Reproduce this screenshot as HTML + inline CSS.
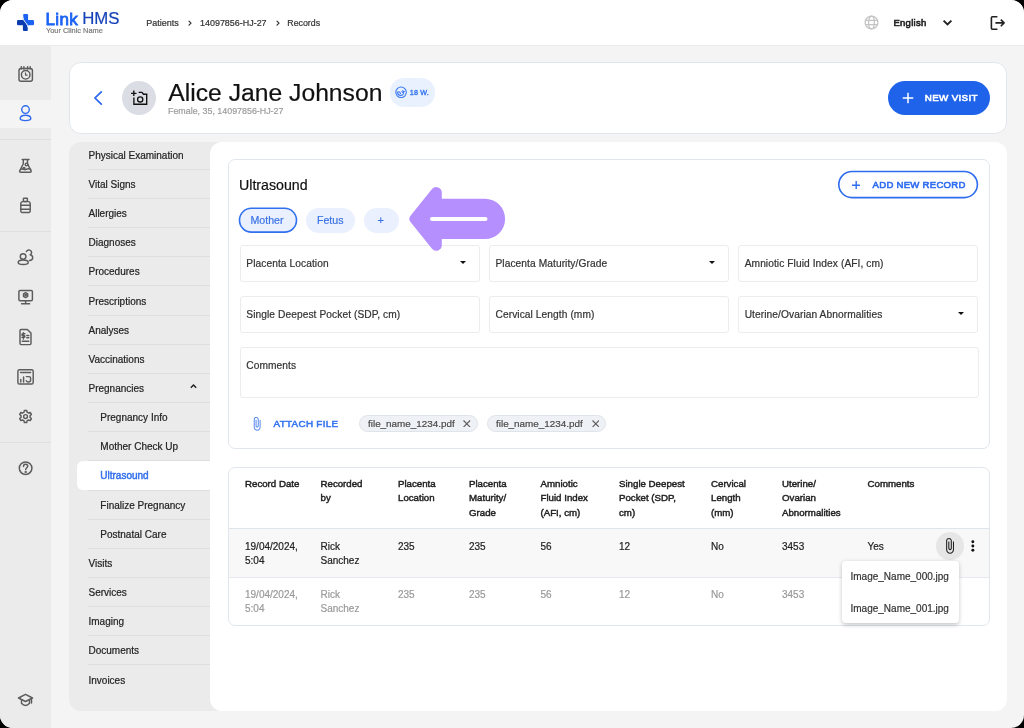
<!DOCTYPE html>
<html><head><meta charset="utf-8">
<style>
*{box-sizing:border-box;margin:0;padding:0}
html,body{width:1024px;height:728px;overflow:hidden;background:#000}
body{font-family:"Liberation Sans",sans-serif;color:#222;position:relative;-webkit-text-stroke:0.2px currentColor}
.page{will-change:transform;position:absolute;left:0;top:0;width:1024px;height:728px;background:#f4f4f4;border-radius:13px;overflow:hidden}
.abs{position:absolute}
.hdr{position:absolute;left:0;top:0;width:1024px;height:46px;background:#fff;border-bottom:1px solid #ebebeb}
.side{position:absolute;left:0;top:46px;width:50.6px;height:682px;background:#ebebeb}
.sep{position:absolute;left:0;width:50.6px;height:1px;background:#e0e0e0}
.t{position:absolute;white-space:nowrap;line-height:1}
.card{position:absolute;background:#fff;border:1px solid #e1e6ec}
.nav{position:absolute;left:68.6px;top:142px;width:160px;height:569px;background:#ebebeb;border-radius:12px}
.main{position:absolute;left:210.1px;top:142px;width:796.8px;height:569px;background:#fff;border-radius:12px 12px 12px 12px}
.ni{position:absolute;left:88.5px;font-size:10px;color:#222;white-space:nowrap;line-height:1}
.nsep{position:absolute;left:88px;width:122px;height:1px;background:#dedede}
.fld{position:absolute;background:#fff;border:1px solid #ececec;border-radius:3px}
.fl{position:absolute;left:5.8px;font-size:10.2px;letter-spacing:0.08px;color:#333;white-space:nowrap;line-height:1}
.tri{position:absolute;width:0;height:0;border-left:3.4px solid transparent;border-right:3.4px solid transparent;border-top:3.9px solid #111}
.th{position:absolute;font-size:9.7px;font-weight:normal;-webkit-text-stroke:0.45px #222;color:#222;line-height:14.1px}
.td{position:absolute;font-size:10px;color:#222;line-height:13.9px}
.td2{position:absolute;font-size:10px;color:#9a9a9a;line-height:13.9px}
</style></head><body>
<div class="page">
  <!-- header -->
  <div class="hdr">
    <svg class="abs" style="left:17px;top:14px" width="17" height="17" viewBox="0 0 17 17">
      <defs>
        <clipPath id="cr"><path d="M5.6 -2V0C5.6 10 11.4 7 11.4 17V19H19V-2Z"/></clipPath>
        <clipPath id="cl"><path d="M5.6 -2V0C5.6 10 11.4 7 11.4 17V19H-2V-2Z"/></clipPath>
      </defs>
      <g clip-path="url(#cr)" fill="#1b62f2"><rect x="5.9" y="0" width="5.2" height="17" rx="1.3"/><rect x="0" y="6" width="17" height="5.3" rx="1.3"/></g>
      <g clip-path="url(#cl)" fill="#0a3cb0"><rect x="5.9" y="0" width="5.2" height="17" rx="1.3"/><rect x="0" y="6" width="17" height="5.3" rx="1.3"/></g>
      <path d="M5.6 0C5.6 10 11.4 7 11.4 17" fill="none" stroke="#fff" stroke-width="1"/>
    </svg>
    <div class="t" style="left:45.4px;top:11.1px;font-size:17px;-webkit-text-stroke:0.8px #1b63f3;color:#1b63f3;letter-spacing:0.4px">Link</div>
    <div class="t" style="left:82.2px;top:11.1px;font-size:16.8px;-webkit-text-stroke:0.2px #1643b8;color:#1643b8;letter-spacing:0px">HMS</div>
    <div class="t" style="left:46px;top:27.2px;font-size:7.4px;color:#7a7a7a">Your Clinic Name</div>
    <div class="t" style="left:146.3px;top:18.9px;font-size:9px;color:#333">Patients</div>
    <svg class="abs" style="left:0;top:0" width="1024" height="46" fill="none" stroke="#333" stroke-width="1.15" stroke-linecap="round" stroke-linejoin="round"><path d="M189 21.2l2 2-2 2M277 21.2l2 2-2 2"/></svg>
    <div class="t" style="left:200px;top:18.9px;font-size:8.95px;color:#333">14097856-HJ-27</div>
    
    <div class="t" style="left:287.3px;top:18.9px;font-size:8.8px;color:#333">Records</div>
    <!-- globe -->
    <svg class="abs" style="left:864.3px;top:15.1px" width="15" height="15" viewBox="0 0 15 15" fill="none" stroke="#c4c4c4" stroke-width="1.25">
      <circle cx="7.5" cy="7.5" r="6.4"/><ellipse cx="7.5" cy="7.5" rx="2.9" ry="6.4"/><path d="M1.3 5.4h12.4M1.3 9.5h12.4"/>
    </svg>
    <div class="t" style="left:893.4px;top:17.5px;font-size:9.5px;-webkit-text-stroke:0.6px #222;color:#222;letter-spacing:0.3px">English</div>
    <svg class="abs" style="left:941.5px;top:19px" width="11" height="8" viewBox="0 0 11 8" fill="none" stroke="#222" stroke-width="1.9"><path d="M1.6 1.6l3.9 3.8 3.9-3.8"/></svg>
    <svg class="abs" style="left:988.3px;top:15.1px" width="18" height="16" viewBox="0 0 18 16" fill="none" stroke="#222" stroke-width="1.6" stroke-linejoin="round">
      <path d="M9.4 1.8H4.3c-.5 0-.9.4-.9.9v10.6c0 .5.4.9.9.9h5.1"/><path d="M7.4 7.9h8.6M12.8 4.6 16.1 7.9 12.8 11.2"/>
    </svg>
  </div>
  <!-- sidebar -->
  <div class="side"></div>
  <div class="abs" style="left:0;top:100px;width:50.6px;height:28px;background:#f4f4f4"></div>
  <div class="sep" style="top:139px"></div>
  <div class="sep" style="top:231px"></div>
  <div class="sep" style="top:442px"></div>
  <svg class="abs" style="left:0;top:45px" width="51" height="683" viewBox="0 45 51 683" fill="none" stroke="#5c5c5c" stroke-width="1.45" stroke-linecap="round" stroke-linejoin="round">
    <!-- calendar clock -->
    <rect x="19" y="68.4" width="13.4" height="12.8" rx="2"/>
    <path d="M21.3 66.6v2.4M23.9 66.6v2.4M27.6 66.6v2.4M30.2 66.6v2.4"/>
    <circle cx="25.7" cy="74.8" r="4.3"/>
    <path d="M25.5 72.8v2.3h1.7" stroke-width="1.2"/>
    <!-- person (active) -->
    <g stroke="#2f6bf0" stroke-width="1.4">
      <circle cx="25.5" cy="109.6" r="3.8"/>
      <path d="M20.2 118.6c0-2.1 2.4-3.4 5.3-3.4s5.3 1.3 5.3 3.4c0 1.4-2.4 2-5.3 2s-5.3-.6-5.3-2z"/>
    </g>
    <!-- flask -->
    <g transform="translate(0 0.8)">
    <path d="M22.2 158.7h6.8M23.3 158.7v4.2l-3.6 7.2c-.4.8.2 1.4 1 1.4h9.4c.8 0 1.4-.6 1-1.4l-3.6-7.2v-4.2"/>
    <circle cx="26.5" cy="163.6" r="1.3"/>
    <path d="M20.7 168.6c2-1.3 3.5 1.3 5.4 0 1.6-1 3-.9 4.6 0"/>
    <circle cx="24" cy="167.5" r="0.9"/>
    </g>
    <!-- bottle -->
    <rect x="23.4" y="198.2" width="4" height="3.2" rx="0.6"/>
    <path d="M22.9 201.6h5.2c1.2 0 2.1 1 2.1 2.2v7.5c0 .6-.5 1.1-1.1 1.1h-7.2c-.6 0-1.1-.5-1.1-1.1v-7.5c0-1.2.9-2.2 2.1-2.2z"/>
    <path d="M20.8 205.3h9.4M20.8 209.2h9.4"/>
    <!-- people -->
    <circle cx="23.1" cy="256.5" r="2.8"/>
    <path d="M18.2 262.4c0-1.5 2.2-2.4 5-2.4s5 .9 5 2.4-2.2 2-5 2-5-.5-5-2z"/>
    <path d="M26.4 251.6c.6-1.2 1.9-1.8 3.2-1.5 1.5.4 2.3 1.9 1.8 3.3-.2.6-.7 1.1-1.3 1.4 1.5.3 2.6 1.4 2.6 2.9 0 1.7-1.5 2.7-3.3 2.7"/>
    <!-- monitor -->
    <rect x="18.9" y="290.4" width="13.5" height="10.3" rx="1.2"/>
    <path d="M25.6 300.7v3M21.6 303.7h8"/>
    <path d="M25.6 292.6l2.1 1.2v2.6l-2.1 1.2-2.1-1.2v-2.6z"/>
    <circle cx="25.6" cy="295.1" r="0.7"/>
    <!-- invoice doc -->
    <path d="M20 330.5c0-.6.5-1.1 1.1-1.1h6.2l3.7 3.7v10.4c0 .6-.5 1.1-1.1 1.1h-8.8c-.6 0-1.1-.5-1.1-1.1z"/>
    <path d="M23.4 332.8v6.3M24.9 333.8h-2c-.6 0-1 .4-1 .9s.4.9 1 .9h1c.6 0 1 .4 1 .9s-.4.9-1 .9h-2"/>
    <path d="M26.8 335.4h2M26.8 337.8h2M22.2 341.3h6.6"/>
    <!-- chart window -->
    <rect x="17.9" y="369.8" width="15.3" height="14.2" rx="1.6"/>
    <path d="M20.6 372.5h10M20.8 382v-2.6M23.6 382v-5M26.4 376.6h2.6c1 0 1.6.8 1.6 1.6v1.9c0 1-.8 1.8-1.8 1.8h-.9c-.8 0-1.5-.5-1.6-1.2"/>
    <!-- gear -->
    <path d="M24.37 410.41 L26.73 410.41 L27.05 412.15 L28.57 413.03 L30.23 412.43 L31.41 414.48 L30.07 415.62 L30.07 417.38 L31.41 418.52 L30.23 420.57 L28.57 419.97 L27.05 420.85 L26.73 422.59 L24.37 422.59 L24.05 420.85 L22.53 419.97 L20.87 420.57 L19.69 418.52 L21.03 417.38 L21.03 415.62 L19.69 414.48 L20.87 412.43 L22.53 413.03 L24.05 412.15Z" stroke-width="1.45"/>
    <circle cx="25.55" cy="416.5" r="1.9"/>
    <!-- help -->
    <circle cx="25.6" cy="468.2" r="6.3" stroke-width="1.5"/>
    <path d="M23.5 466.4c0-1.3.9-2.2 2.1-2.2s2.1.8 2.1 2c0 1.5-2 1.7-2 3.4" stroke-width="1.5"/>
    <circle cx="25.7" cy="471.9" r="0.45" fill="#666"/>
    <!-- grad cap -->
    <path d="M25.5 694.3l7 3.7-7 3.5-7-3.5z"/>
    <path d="M21.5 700v3.2c1.2 1.5 2.6 2.2 4 2.2s2.8-.7 4-2.2V700M31.5 698.5v4.4"/>
  </svg>

  <!-- patient card -->
  <div class="card" style="left:68.5px;top:62px;width:938.3px;height:71.5px;border-radius:12px"></div>
  <svg class="abs" style="left:92px;top:90px" width="12" height="16" viewBox="0 0 12 16" fill="none" stroke="#2a66f0" stroke-width="1.7" stroke-linecap="round"><path d="M9.3 1.8 3 8l6.3 6.2"/></svg>
  <div class="abs" style="left:122.3px;top:81px;width:34px;height:34px;border-radius:50%;background:#dadee4"></div>
  <svg class="abs" style="left:0;top:0" width="1024" height="728" fill="none" stroke="#111" stroke-width="1.35">
    <path d="M131.1 93.3h5.4M133.8 90.6v5.4"/>
    <path d="M133.9 97.6v6.6h12.8v-10h-3.2l-1.5-1.8h-3.4"/>
    <circle cx="140.2" cy="99.4" r="2.6"/>
  </svg>
  <div class="t" style="left:168.3px;top:81.2px;font-size:24.7px;color:#111">Alice Jane Johnson</div>
  <div class="t" style="left:168px;top:107.1px;font-size:8.9px;color:#9c9c9c">Female, 35, 14097856-HJ-27</div>
  <div class="abs" style="left:390px;top:78.3px;width:45px;height:28.5px;border-radius:14px;background:#eaf1fe"></div>
  <svg class="abs" style="left:0;top:0" width="1024" height="728" viewBox="0 0 1024 728" fill="none" stroke="#3474f2" stroke-width="1.05" stroke-linecap="round">
    <circle cx="401.06" cy="92.3" r="5.25"/>
    <path d="M397.4 92.4c.4 2 1.7 3.1 3.2 3.1 1.8 0 3-1.4 3.1-3.2"/>
    <path d="M397.4 92.4c.6-.8 1.8-.9 2.5.1l.7 1.1"/>
    <ellipse cx="402.9" cy="91.6" rx="1.2" ry="0.85" stroke-width="0.95"/>
  </svg>
  <div class="t" style="left:409.8px;top:88.9px;font-size:7.2px;-webkit-text-stroke:0.4px #3a78f2;color:#3a78f2;letter-spacing:0.12px">18 W.</div>
  <div class="abs" style="left:887.5px;top:81px;width:102px;height:34px;border-radius:17px;background:#1f63ea"></div>
  <svg class="abs" style="left:900.8px;top:91.1px" width="14" height="14" viewBox="0 0 14 14" stroke="#fff" stroke-width="1.5"><path d="M7 1.7v10.6M1.7 7h10.6"/></svg>
  <div class="t" style="left:924.8px;top:93.4px;font-size:9.8px;-webkit-text-stroke:0.6px #fff;color:#fff;letter-spacing:0.32px">NEW VISIT</div>

  <!-- nav -->
  <div class="nav"></div>
  <div class="main"></div>
  <div class="ni" style="top:150.73px">Physical Examination</div>
  <div class="nsep" style="top:168.75px"></div>
  <div class="ni" style="top:179.89px">Vital Signs</div>
  <div class="nsep" style="top:197.91px"></div>
  <div class="ni" style="top:209.05px">Allergies</div>
  <div class="nsep" style="top:227.07px"></div>
  <div class="ni" style="top:238.22px">Diagnoses</div>
  <div class="nsep" style="top:256.23px"></div>
  <div class="ni" style="top:267.38px">Procedures</div>
  <div class="nsep" style="top:285.39px"></div>
  <div class="ni" style="top:296.54px">Prescriptions</div>
  <div class="nsep" style="top:314.55px"></div>
  <div class="ni" style="top:325.70px">Analyses</div>
  <div class="nsep" style="top:343.71px"></div>
  <div class="ni" style="top:354.86px">Vaccinations</div>
  <div class="nsep" style="top:372.87px"></div>
  <div class="ni" style="top:384.01px">Pregnancies</div>
  <svg class="abs" style="left:188.6px;top:382.81px" width="9" height="7" viewBox="0 0 9 7" fill="none" stroke="#222" stroke-width="1.45"><path d="M1.8 4.8 4.5 2.1l2.7 2.7"/></svg>
  <div class="nsep" style="top:402.03px"></div>
  <div class="ni" style="top:413.18px;left:100.3px">Pregnancy Info</div>
  <div class="nsep" style="top:431.19px"></div>
  <div class="ni" style="top:442.34px;left:100.3px">Mother Check Up</div>
  <div class="nsep" style="top:460.35px"></div>
  <div class="abs" style="left:76.5px;top:461.45px;width:134px;height:28.56px;background:#fff;border-radius:6px 0 0 6px"></div>
  <div class="ni" style="top:471.10px;left:100.3px;color:#3370ec;-webkit-text-stroke:0.45px #3370ec">Ultrasound</div>
  <div class="nsep" style="top:489.51px"></div>
  <div class="ni" style="top:500.66px;left:100.3px">Finalize Pregnancy</div>
  <div class="nsep" style="top:518.67px"></div>
  <div class="ni" style="top:529.81px;left:100.3px">Postnatal Care</div>
  <div class="nsep" style="top:547.83px"></div>
  <div class="ni" style="top:558.97px">Visits</div>
  <div class="nsep" style="top:576.99px"></div>
  <div class="ni" style="top:588.13px">Services</div>
  <div class="nsep" style="top:606.15px"></div>
  <div class="ni" style="top:617.29px">Imaging</div>
  <div class="nsep" style="top:635.31px"></div>
  <div class="ni" style="top:646.45px">Documents</div>
  <div class="nsep" style="top:664.47px"></div>
  <div class="ni" style="top:675.61px">Invoices</div>

  <!-- ultrasound card -->
  <div class="card" style="left:227.5px;top:159px;width:762.5px;height:290px;border-radius:7px"></div>
  <div class="t" style="left:239px;top:178px;font-size:14.2px;color:#111">Ultrasound</div>
  <svg class="abs" style="left:0;top:0" width="1024" height="728"><rect x="838.8" y="171.5" width="138.6" height="26.1" rx="13.05" fill="none" stroke="#2e6cf0" stroke-width="1.6"/></svg>
  <svg class="abs" style="left:851.8px;top:180.8px" width="8.4" height="8.4" viewBox="0 0 8.4 8.4" stroke="#2e6cf0" stroke-width="1.4"><path d="M4.2 0v8.4M0 4.2h8.4"/></svg>
  <div class="t" style="left:872.6px;top:179.8px;font-size:9.6px;-webkit-text-stroke:0.6px #2e6cf0;color:#2e6cf0;letter-spacing:0.25px">ADD NEW RECORD</div>

  <svg class="abs" style="left:0;top:0" width="1024" height="728"><rect x="239.5" y="208.3" width="57" height="23.8" rx="11.9" fill="#eaf0fd" stroke="#3170ef" stroke-width="1.6"/></svg>
  <div class="t" style="left:250.5px;top:215.1px;font-size:10.6px;color:#3a72e6">Mother</div>
  <div class="abs" style="left:305.6px;top:207.5px;width:49.8px;height:25.5px;border-radius:13px;background:#eaf0fd"></div>
  <div class="t" style="left:317px;top:215.1px;font-size:10.6px;color:#3a72e6">Fetus</div>
  <div class="abs" style="left:364.2px;top:207.5px;width:34.4px;height:25.5px;border-radius:13px;background:#eaf0fd"></div>
  <div class="t" style="left:377.5px;top:215px;font-size:11px;color:#3a72e6">+</div>



  <!-- fields -->
  <div class="fld" style="left:239.5px;top:244.5px;width:240px;height:37px"><div class="fl" style="top:13.0px">Placenta Location</div><div class="tri" style="left:219.2px;top:15.6px"></div></div>
  <div class="fld" style="left:488.7px;top:244.5px;width:240px;height:37px"><div class="fl" style="top:13.0px">Placenta Maturity/Grade</div><div class="tri" style="left:219.2px;top:15.6px"></div></div>
  <div class="fld" style="left:737.9px;top:244.5px;width:240.5px;height:37px"><div class="fl" style="top:13.0px">Amniotic Fluid Index (AFI, cm)</div></div>
  <div class="fld" style="left:239.5px;top:295.5px;width:240px;height:37px"><div class="fl" style="top:13.0px">Single Deepest Pocket (SDP, cm)</div></div>
  <div class="fld" style="left:488.7px;top:295.5px;width:240px;height:37px"><div class="fl" style="top:13.0px">Cervical Length (mm)</div></div>
  <div class="fld" style="left:737.9px;top:295.5px;width:240.5px;height:37px"><div class="fl" style="top:13.0px">Uterine/Ovarian Abnormalities</div><div class="tri" style="left:219.2px;top:15.6px"></div></div>
  <div class="fld" style="left:239.5px;top:346.5px;width:739px;height:51px"><div class="fl" style="top:13.0px">Comments</div></div>

  <!-- arrow -->
  <svg class="abs" style="left:400px;top:180px" width="110" height="76" viewBox="400 180 110 76">
    <path d="M410.53 222.04A5.00 5.00 0 0 1 410.53 215.76L432.02 189.12A5.50 5.50 0 0 1 441.80 192.57L441.80 198.70L484.90 198.70A20.2 20.2 0 0 1 484.90 239.10L441.80 239.10L441.80 245.23A5.50 5.50 0 0 1 432.02 248.68Z" fill="#b48ffd"/>
    <path d="M432 218.9h53.5" stroke="#fff" stroke-width="4" stroke-linecap="round"/>
  </svg>
  <svg class="abs" style="left:0;top:0" width="1024" height="728" viewBox="0 0 1024 728"><path transform="translate(249.41 416.38) scale(0.62)" d="M16.5 6v11.5c0 2.21-1.79 4-4 4s-4-1.79-4-4V5c0-1.38 1.12-2.5 2.5-2.5s2.5 1.12 2.5 2.5v10.5c0 .55-.45 1-1 1s-1-.45-1-1V6H10v9.5c0 1.38 1.12 2.5 2.5 2.5s2.5-1.12 2.5-2.5V5c0-2.21-1.79-4-4-4S7 2.79 7 5v12.5c0 3.04 2.46 5.5 5.5 5.5s5.5-2.46 5.5-5.5V6h-1.5z" fill="#4a82f0"/></svg>
  <div class="t" style="left:273.6px;top:418.9px;font-size:9.9px;-webkit-text-stroke:0.55px #3574f0;color:#3574f0;letter-spacing:0.28px">ATTACH FILE</div>
  <div class="abs" style="left:359px;top:415px;width:119px;height:17px;border-radius:9px;background:#eef1f5;border:1px solid #dfe4ea"></div>
  <div class="t" style="left:368px;top:418.8px;font-size:9.9px;color:#4a4a4a">file_name_1234.pdf</div>
  <svg class="abs" style="left:463.4px;top:419.9px" width="7.6" height="7.6" viewBox="0 0 7.6 7.6" stroke="#5a5a5a" stroke-width="1.1"><path d="M.5 .5l6.6 6.6M7.1 .5 .5 7.1"/></svg>
  <div class="abs" style="left:487.3px;top:415px;width:119px;height:17px;border-radius:9px;background:#eef1f5;border:1px solid #dfe4ea"></div>
  <div class="t" style="left:496px;top:418.8px;font-size:9.9px;color:#4a4a4a">file_name_1234.pdf</div>
  <svg class="abs" style="left:591.5px;top:419.9px" width="7.6" height="7.6" viewBox="0 0 7.6 7.6" stroke="#5a5a5a" stroke-width="1.1"><path d="M.5 .5l6.6 6.6M7.1 .5 .5 7.1"/></svg>

  <!-- table -->
  <div class="card" style="left:227.5px;top:466.5px;width:762.5px;height:159px;border-radius:7px;overflow:hidden">
    <div class="abs" style="left:0;top:60.5px;width:100%;height:1px;background:#dfe5ec"></div>
    <div class="abs" style="left:0;top:61.5px;width:100%;height:48px;background:#f8f8f9"></div>
    <div class="abs" style="left:0;top:109.5px;width:100%;height:1px;background:#e6eaef"></div>
  </div>
  <div class="th" style="left:245px;top:477.4px">Record Date</div>
  <div class="th" style="left:320.5px;top:477.4px">Recorded<br>by</div>
  <div class="th" style="left:398px;top:477.4px">Placenta<br>Location</div>
  <div class="th" style="left:469px;top:477.4px">Placenta<br>Maturity/<br>Grade</div>
  <div class="th" style="left:540.5px;top:477.4px">Amniotic<br>Fluid Index<br>(AFI, cm)</div>
  <div class="th" style="left:619px;top:477.4px">Single Deepest<br>Pocket (SDP,<br>cm)</div>
  <div class="th" style="left:711px;top:477.4px">Cervical<br>Length<br>(mm)</div>
  <div class="th" style="left:782px;top:477.4px">Uterine/<br>Ovarian<br>Abnormalities</div>
  <div class="th" style="left:867.5px;top:477.4px">Comments</div>

  <div class="td" style="left:245px;top:540.3px">19/04/2024,<br>5:04</div>
  <div class="td" style="left:320.5px;top:540.3px">Rick<br>Sanchez</div>
  <div class="td" style="left:398px;top:540.3px">235</div>
  <div class="td" style="left:469px;top:540.3px">235</div>
  <div class="td" style="left:540.5px;top:540.3px">56</div>
  <div class="td" style="left:619px;top:540.3px">12</div>
  <div class="td" style="left:711px;top:540.3px">No</div>
  <div class="td" style="left:782px;top:540.3px">3453</div>
  <div class="td" style="left:867.5px;top:540.3px">Yes</div>
  <div class="abs" style="left:936.3px;top:532px;width:27.5px;height:27.5px;border-radius:50%;background:#e6e6e6"></div>
  <svg class="abs" style="left:0;top:0" width="1024" height="728" viewBox="0 0 1024 728"><path transform="translate(941.06 537.18) scale(0.72)" d="M16.5 6v11.5c0 2.21-1.79 4-4 4s-4-1.79-4-4V5c0-1.38 1.12-2.5 2.5-2.5s2.5 1.12 2.5 2.5v10.5c0 .55-.45 1-1 1s-1-.45-1-1V6H10v9.5c0 1.38 1.12 2.5 2.5 2.5s2.5-1.12 2.5-2.5V5c0-2.21-1.79-4-4-4S7 2.79 7 5v12.5c0 3.04 2.46 5.5 5.5 5.5s5.5-2.46 5.5-5.5V6h-1.5z" fill="#222"/><circle cx="972.85" cy="541.7" r="1.45" fill="#111"/><circle cx="972.85" cy="546" r="1.45" fill="#111"/><circle cx="972.85" cy="550.3" r="1.45" fill="#111"/></svg>

  <div class="td2" style="left:245px;top:588.4px">19/04/2024,<br>5:04</div>
  <div class="td2" style="left:320.5px;top:588.4px">Rick<br>Sanchez</div>
  <div class="td2" style="left:398px;top:588.4px">235</div>
  <div class="td2" style="left:469px;top:588.4px">235</div>
  <div class="td2" style="left:540.5px;top:588.4px">56</div>
  <div class="td2" style="left:619px;top:588.4px">12</div>
  <div class="td2" style="left:711px;top:588.4px">No</div>
  <div class="td2" style="left:782px;top:588.4px">3453</div>

  <!-- popup -->
  <div class="abs" style="left:842px;top:561px;width:116.5px;height:62px;background:#fff;border-radius:4px;box-shadow:0 1.5px 4px rgba(0,0,0,0.22)"></div>
  <div class="t" style="left:850.5px;top:572px;font-size:10px;color:#333">Image_Name_000.jpg</div>
  <div class="t" style="left:850.5px;top:603.5px;font-size:10px;color:#333">Image_Name_001.jpg</div>
</div>
</body></html>
